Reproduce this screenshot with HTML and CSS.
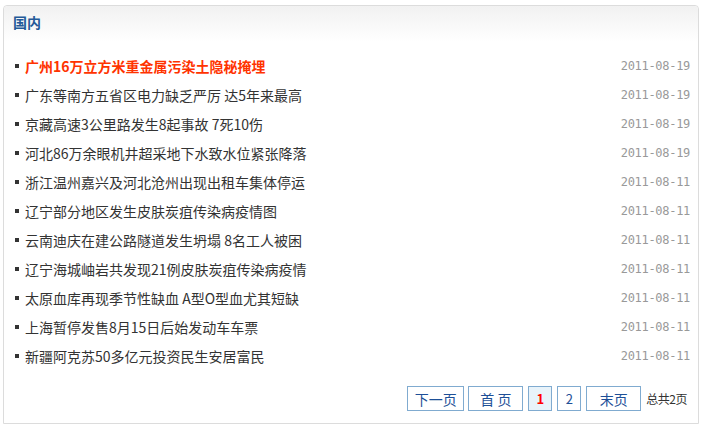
FILE: index.html
```html
<!DOCTYPE html>
<html lang="zh-CN">
  <head>
    <meta charset="UTF-8" />
    <title>国内</title>
    <link rel="stylesheet" href="styles.css">
  </head>
  <body>
    <div class="box">
      <div class="box-head"><span class="box-title">国内</span></div>
      <ul class="news">
        <li class="hot"><a href="#">广州16万立方米重金属污染土隐秘掩埋</a><span class="date">2011-08-19</span></li>
        <li><a href="#">广东等南方五省区电力缺乏严厉 达5年来最高</a><span class="date">2011-08-19</span></li>
        <li><a href="#">京藏高速3公里路发生8起事故 7死10伤</a><span class="date">2011-08-19</span></li>
        <li><a href="#">河北86万余眼机井超采地下水致水位紧张降落</a><span class="date">2011-08-19</span></li>
        <li><a href="#">浙江温州嘉兴及河北沧州出现出租车集体停运</a><span class="date">2011-08-11</span></li>
        <li><a href="#">辽宁部分地区发生皮肤炭疽传染病疫情图</a><span class="date">2011-08-11</span></li>
        <li><a href="#">云南迪庆在建公路隧道发生坍塌 8名工人被困</a><span class="date">2011-08-11</span></li>
        <li><a href="#">辽宁海城岫岩共发现21例皮肤炭疽传染病疫情</a><span class="date">2011-08-11</span></li>
        <li><a href="#">太原血库再现季节性缺血 A型O型血尤其短缺</a><span class="date">2011-08-11</span></li>
        <li><a href="#">上海暂停发售8月15日后始发动车车票</a><span class="date">2011-08-11</span></li>
        <li><a href="#">新疆阿克苏50多亿元投资民生安居富民</a><span class="date">2011-08-11</span></li>
      </ul>
      <div class="pager">
        <a href="#" class="pg next">下一页</a>
        <a href="#" class="pg wide">首 页</a>
        <span class="pg num current">1</span>
        <a href="#" class="pg num">2</a>
        <a href="#" class="pg wide">末页</a>
        <span class="total">总共2页</span>
      </div>
    </div>
  </body>
</html>
```

FILE: styles.css
```css
/* 基本样式 */
body {
    margin: 0;
    font-family: "Noto Sans CJK SC", "DejaVu Sans", sans-serif;
    font-size: 14px;
    color: #333;
    background-color: #ffffff;
}

.box {
    margin: 5px 3px 0 3px;
    height: 419px;
    border: 1px solid #dcdcdc;
    border-radius: 4px 4px 0 0;
    box-sizing: border-box;
    background-color: #ffffff;
}

.box-head {
    height: 36px;
    padding: 6px 0 0 9px;
    box-sizing: border-box;
    border-radius: 4px 4px 0 0;
    background: linear-gradient(#f1f1f1, #ffffff);
}

.box-title {
    font-size: 14px;
    font-weight: bold;
    color: #245a98;
    line-height: 18px;
}

/* 新闻列表 */
.news {
    list-style: none;
    margin: 0;
    padding: 10px 8px 0 11px;
}

.news li {
    display: flex;
    align-items: center;
    height: 29px;
    line-height: 29px;
}

.news li::before {
    content: "";
    width: 4px;
    height: 4px;
    background-color: #333;
    margin-right: 6px;
    margin-top: -2px;
}

.news a {
    flex: 1;
    color: #333;
    text-decoration: none;
}

.news .hot a {
    color: #ff3300;
    font-weight: bold;
}

.date {
    font-size: 12px;
    color: #999;
    font-family: "DejaVu Sans Mono", monospace;
    letter-spacing: -0.3px;
}

/* 分页 */
.pager {
    display: flex;
    justify-content: flex-end;
    align-items: center;
    gap: 5px;
    margin-top: 15px;
    padding-right: 11px;
}

.pg {
    height: 25px;
    box-sizing: border-box;
    border: 1px solid #80abd0;
    color: #1d4f97;
    text-decoration: none;
    font-size: 14px;
    display: flex;
    align-items: center;
    justify-content: center;
}

.next {
    width: 57px;
    margin-right: -1px;
}

.wide {
    width: 55px;
}

.num {
    width: 24px;
    font-size: 13px;
}

.current {
    background-color: #e8f3fa;
    color: #ff0000;
    font-weight: bold;
}

.total {
    font-size: 12px;
    letter-spacing: -0.5px;
    color: #333;
}
```
